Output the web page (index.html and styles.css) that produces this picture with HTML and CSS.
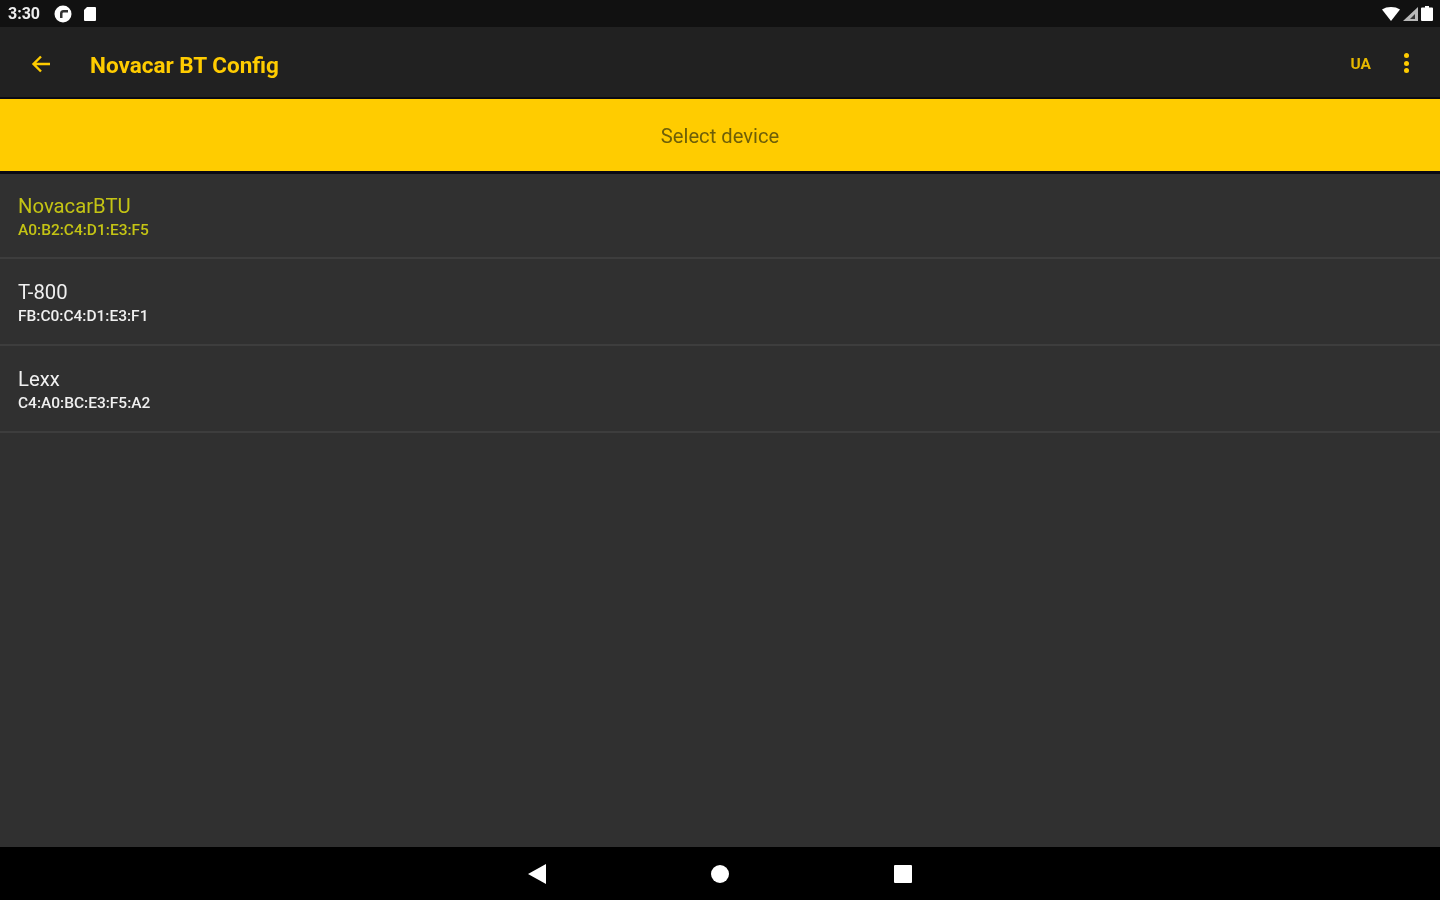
FILE: index.html
```html
<!DOCTYPE html>
<html>

<head>
    <title>Novacar BT Config</title>
    <link rel="stylesheet" href="styles.css">
</head>

<body>
    <div class="status-bar">
        <div class="status-left">
            <span class="clock">3:30</span>
            <svg class="status-icon" width="18" height="18" viewBox="0 0 18 18">
                <circle cx="9" cy="9" r="8.500" fill="#fff" />
                <path d="M14 5H9.500A3.500 3.500 0 0 0 6 8.500V13h2.500V8.500a1 1 0 0 1 1-1H14z" fill="#333" />
            </svg>
            <svg class="status-icon" width="14" height="16" viewBox="0 0 14 16">
                <path d="M4 1h8a1 1 0 0 1 1 1v12a1 1 0 0 1-1 1H2a1 1 0 0 1-1-1V4z" fill="#fff" />
            </svg>
        </div>
        <div class="status-right">
            <svg width="18" height="14" viewBox="0 0 18 14">
                <path d="M0 2.500C2.500 .8 5.600 0 9 0s6.500 .8 9 2.500L9 14z" fill="#fff" />
            </svg>
            <svg width="15" height="14" viewBox="0 0 15 14">
                <path d="M15 0v14H0z" fill="#b8b8b8" />
                <path d="M12 7v5H7z" fill="#333" />
            </svg>
            <svg width="12" height="15" viewBox="0 0 12 15">
                <path d="M4 0h4v1.500h3a1 1 0 0 1 1 1V14a1 1 0 0 1-1 1H1a1 1 0 0 1-1-1V2.500a1 1 0 0 1 1-1h3z" fill="#fff" />
            </svg>
        </div>
    </div>

    <header class="toolbar">
        <svg class="back-icon" width="20" height="20" viewBox="0 0 20 20">
            <path d="M19 10H3M10 2.500 2.500 10l7.500 7.500" fill="none" stroke="#ffcc00" stroke-width="2.400" />
        </svg>
        <h1 class="app-title">Novacar BT Config</h1>
        <span class="lang">UA</span>
        <div class="menu-dots">
            <span></span>
            <span></span>
            <span></span>
        </div>
    </header>

    <div class="banner"><span>Select device</span></div>

    <main class="device-list">
        <div class="device device-active">
            <div class="device-name">NovacarBTU</div>
            <div class="device-addr">A0:B2:C4:D1:E3:F5</div>
        </div>
        <div class="device">
            <div class="device-name">T-800</div>
            <div class="device-addr">FB:C0:C4:D1:E3:F1</div>
        </div>
        <div class="device">
            <div class="device-name">Lexx</div>
            <div class="device-addr">C4:A0:BC:E3:F5:A2</div>
        </div>
    </main>

    <nav class="nav-bar">
        <svg width="18" height="20" viewBox="0 0 18 20">
            <path d="M18 0v20L0 10z" fill="#fff" />
        </svg>
        <svg width="18" height="18" viewBox="0 0 18 18">
            <circle cx="9" cy="9" r="9" fill="#fff" />
        </svg>
        <svg width="18" height="18" viewBox="0 0 18 18">
            <rect width="18" height="18" rx="1" fill="#fff" />
        </svg>
    </nav>
</body>

</html>
```

FILE: styles.css
```css
body {
    margin: 0;
    height: 900px;
    overflow: hidden;
    display: flex;
    flex-direction: column;
    font-family: Roboto, "Liberation Sans", sans-serif;
    background-color: #303030;
}

/* the reference is an upscaled capture, so text and icons are a bit soft */
.status-left > *,
.status-right > *,
.toolbar > *,
.banner span,
.device > *,
.nav-bar svg {
    filter: blur(0.7px);
}

.status-bar {
    height: 27px;
    flex: none;
    display: flex;
    align-items: center;
    justify-content: space-between;
    padding: 0 7px 0 8px;
    background-color: #111;
}

.status-left,
.status-right {
    display: flex;
    align-items: center;
}

.status-right {
    gap: 3px;
}

.clock {
    width: 46px;
    color: #eee;
    font-size: 16px;
    font-weight: 700;
}

.status-icon {
    margin-right: 11px;
}

.toolbar {
    height: 66px;
    flex: none;
    display: flex;
    align-items: center;
    padding: 4px 31px 0 31px;
    background-color: #212121;
    border-bottom: 2px solid #0a0a14;
}

.back-icon {
    margin-right: 39px;
}

.app-title {
    flex: 1;
    margin: 2px 0 0;
    color: #ffcc00;
    font-size: 22.500px;
    font-weight: 700;
}

.lang {
    margin-right: 33px;
    color: #e6b800;
    font-size: 15.500px;
    font-weight: 700;
}

.menu-dots {
    display: flex;
    flex-direction: column;
    gap: 2.500px;
    margin-bottom: 2px;
}

.menu-dots span {
    width: 5px;
    height: 5px;
    border-radius: 50%;
    background-color: #ffcc00;
}

.banner {
    height: 70px;
    padding-top: 2px;
    flex: none;
    display: flex;
    align-items: center;
    justify-content: center;
    color: #6e5f08;
    font-size: 20.200px;
    background-color: #ffcc00;
    border-bottom: 3px solid #0a0a14;
}

.device-list {
    flex: 1;
}

.device {
    height: 87px;
    box-sizing: border-box;
    padding-top: 21px;
    padding-left: 18px;
    color: #f0f0f0;
    border-bottom: 2px solid #3d3d3d;
}

.device-active {
    height: 85px;
    padding-top: 20px;
    color: #c4c414;
}

.device-name {
    font-size: 20.300px;
    line-height: 24px;
}

.device-addr {
    font-size: 15.500px;
    font-weight: 500;
    line-height: 24px;
}

.nav-bar {
    height: 53px;
    flex: none;
    display: flex;
    align-items: center;
    justify-content: center;
    gap: 165px;
    background-color: #000;
}
```
